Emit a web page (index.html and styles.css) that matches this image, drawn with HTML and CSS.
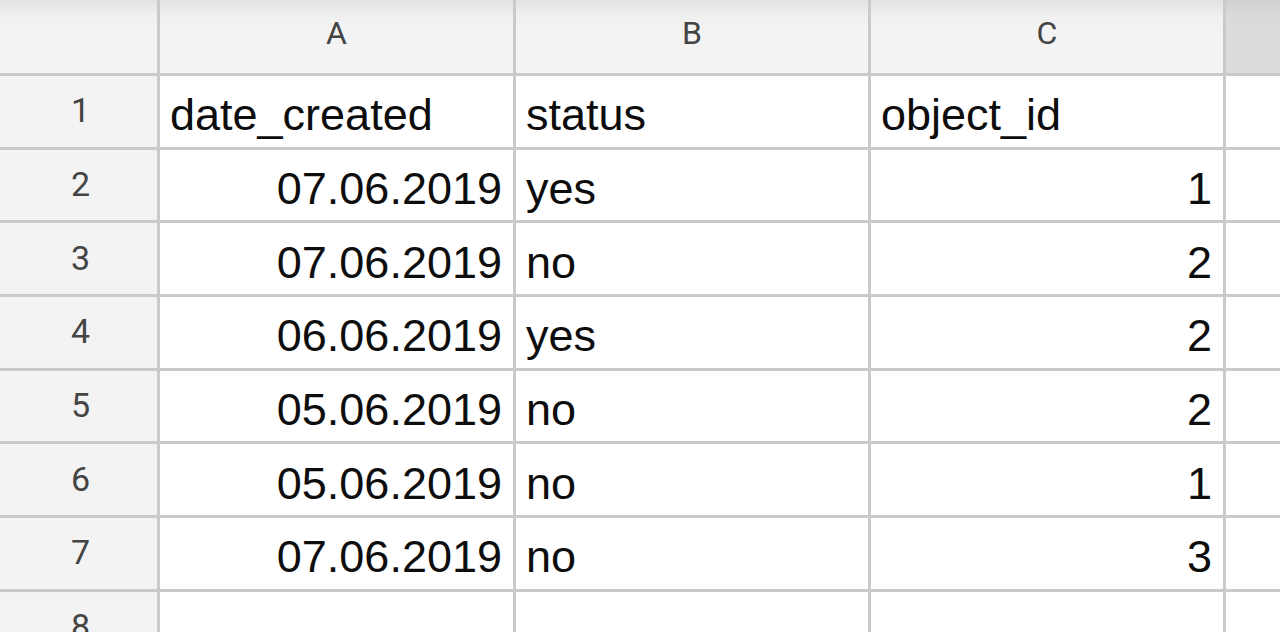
FILE: index.html
```html
<!DOCTYPE html>
<html>
<head>
<meta charset="utf-8">
<link rel="stylesheet" href="styles.css">
</head>
<body>
<div class="sheet">
  <div class="hd corner"></div>
  <div class="hd col">A</div>
  <div class="hd col">B</div>
  <div class="hd col">C</div>
  <div class="hd col extra"></div>

  <div class="rn">1</div>
  <div class="cell">date_created</div>
  <div class="cell">status</div>
  <div class="cell">object_id</div>
  <div class="cell"></div>

  <div class="rn">2</div>
  <div class="cell num">07.06.2019</div>
  <div class="cell">yes</div>
  <div class="cell num">1</div>
  <div class="cell"></div>

  <div class="rn">3</div>
  <div class="cell num">07.06.2019</div>
  <div class="cell">no</div>
  <div class="cell num">2</div>
  <div class="cell"></div>

  <div class="rn">4</div>
  <div class="cell num">06.06.2019</div>
  <div class="cell">yes</div>
  <div class="cell num">2</div>
  <div class="cell"></div>

  <div class="rn">5</div>
  <div class="cell num">05.06.2019</div>
  <div class="cell">no</div>
  <div class="cell num">2</div>
  <div class="cell"></div>

  <div class="rn">6</div>
  <div class="cell num">05.06.2019</div>
  <div class="cell">no</div>
  <div class="cell num">1</div>
  <div class="cell"></div>

  <div class="rn">7</div>
  <div class="cell num">07.06.2019</div>
  <div class="cell">no</div>
  <div class="cell num">3</div>
  <div class="cell"></div>

  <div class="rn">8</div>
  <div class="cell"></div>
  <div class="cell"></div>
  <div class="cell"></div>
  <div class="cell"></div>
</div>
</body>
</html>
```

FILE: styles.css
```css
html, body {
  margin: 0;
  padding: 0;
  background: #ffffff;
  overflow: hidden;
  height: 632px;
}

.sheet {
  display: grid;
  grid-template-columns: 157px 353px 352px 352px 60px;
  grid-template-rows: 73px repeat(8, 70.7px);
  column-gap: 3px;
  row-gap: 3px;
  background: #cacaca;
  width: 1290px;
}

.hd {
  background: linear-gradient(#e2e2e2 0px, #efefef 14px, #f3f3f3 30px);
  color: #444444;
  font-family: Roboto, "Noto Sans", sans-serif;
  font-size: 32px;
  display: flex;
  align-items: center;
  justify-content: center;
  padding-bottom: 8px;
  box-sizing: border-box;
}

.hd.extra {
  background: linear-gradient(#cfcfcf 0px, #d9d9d9 14px, #dcdcdc 30px);
}

.rn {
  background: #f3f3f3;
  color: #444444;
  font-family: Roboto, "Noto Sans", sans-serif;
  font-size: 34px;
  display: flex;
  align-items: center;
  justify-content: center;
  padding: 0 0 2px 4px;
  box-sizing: border-box;
}

.cell {
  background: #ffffff;
  color: #0d0d0d;
  font-family: "Liberation Sans", Arial, sans-serif;
  font-size: 45px;
  display: flex;
  align-items: center;
  padding: 8px 11px 0 10px;
  box-sizing: border-box;
  white-space: nowrap;
  overflow: hidden;
}

.cell.num {
  justify-content: flex-end;
}
```
